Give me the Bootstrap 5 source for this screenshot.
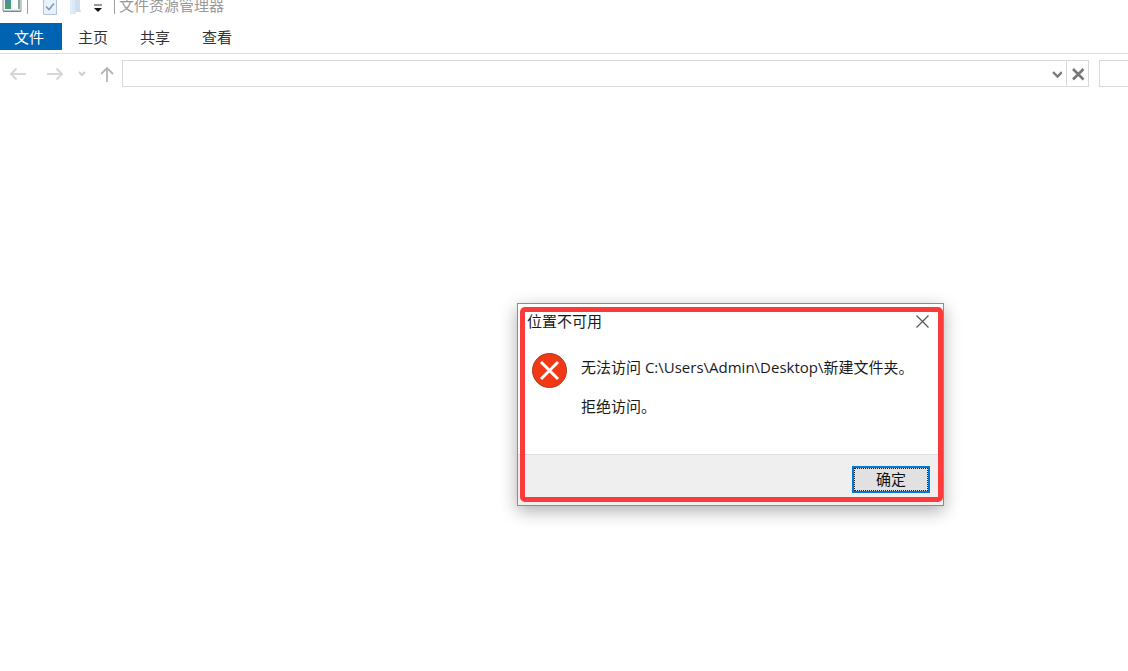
<!DOCTYPE html>
<html lang="zh-CN">
<head>
<meta charset="utf-8">
<meta name="viewport" content="width=device-width, initial-scale=1">
<title>文件资源管理器</title>
<link href="https://cdn.jsdelivr.net/npm/bootstrap@5.3.0/dist/css/bootstrap.min.css" rel="stylesheet">
<style>
  body { font-family: "Open Sans", "Noto Sans CJK SC", sans-serif; font-size: 15px; line-height: 20px; color: #1a1a1a; background: #fff; }
  svg { display: block; flex: none; }
  .titlebar { height: 23px; }
  .titlebar .caption { line-height: 11px; color: #999; padding-left: 4px; }
  .divider { width: 1px; height: 14px; background: #a0a0a0; }
  .quick { gap: 12px; padding-left: 14px; padding-right: 11px; }
  .ribbon { height: 31px; border-bottom: 1px solid #dcdddd; }
  .ribbon .nav-link { width: 62px; height: 27px; padding: 0; line-height: 28px; text-align: center; color: #333; border-radius: 0; }
  .ribbon .nav-link.active { padding-right: 4px; color: #fff; background: #0063b1; }
  .addressbar { padding-top: 6px; }
  .navigation { width: 122px; height: 27px; padding-left: 9px; }
  .plain { border: 0; padding: 0; background: none; }
  .field { height: 27px; border: 1px solid #d9d9d9; }
  .field input { border: 0; outline: 0; background: none; min-width: 0; }
  .stop { width: 22px; border-left: 1px solid #d9d9d9 !important; }
  .search { width: 40px; margin-left: 10px; margin-right: -11px; }
  .message { top: 303px; left: calc(50% - 47px); width: 427px; background: #fff; border: 1px solid #8a8c8c; box-shadow: 0 5px 16px rgba(0,0,0,.32); }
  .message-head { padding: 7px 14px 0 9px; }
  .message-body { gap: 13px; min-height: 123px; padding: 22px 14px 0 14px; }
  .message-body p { margin-bottom: 19px; }
  .message-foot { height: 51px; padding: 11px 13px 0 0; border-top: 1px solid #dfdfdf; background: #efefef; }
  .confirm { width: 78px; height: 27px; padding: 0; border: 2px solid #0078d7; background: #e1e1e1; color: #111; line-height: 21px; outline: 1px dotted #222; outline-offset: -3px; }
  .highlight { inset: 3px 0 3px 2px; border: 5px solid #fb3a3a; border-radius: 5px; pointer-events: none; }
</style>
</head>
<body class="overflow-hidden">
<header>
  <div class="titlebar d-flex align-items-start">
    <svg width="27" height="14" viewBox="0 0 27 14">
      <path d="M3 -1h18v12H3z" fill="#edf2f5" stroke="#9299a0"/>
      <path d="M5 0h6v9H5z" fill="#4c9a78"/><path d="M5 0h5L5 5z" fill="#4d86ad"/>
      <path d="M13 0h5v9h-5z" fill="#fff"/><path d="M18 0h2v9h-2z" fill="#79b394"/>
      <path d="M3 11.500h18" stroke="#7e858b"/>
    </svg>
    <span class="divider"></span>
    <div class="quick d-flex">
      <svg width="16" height="16" viewBox="0 0 16 16" role="img" aria-label="属性"><path d="M1.500 -1h13v15.500h-13z" fill="#e9f1fb" stroke="#b3c2dc"/><path d="M4 6.500l3 3L12 3.500" fill="none" stroke="#8299c1" stroke-width="1.600"/></svg>
      <svg width="11" height="15" viewBox="0 0 11 15" role="img" aria-label="新建文件夹"><path d="M0 0h6v14H0z" fill="#dce8f8"/><path d="M5 0h5v10l1 1v1H5z" fill="#d0def1"/><path d="M1 0v12" stroke="#edf4fc"/></svg>
      <svg width="10" height="14" viewBox="0 0 10 14" role="img" aria-label="自定义"><path d="M1 5h8" stroke="#333"/><path d="M1 8h8L5 12z" fill="#111"/></svg>
    </div>
    <span class="divider"></span>
    <span class="caption">文件资源管理器</span>
  </div>
  <nav class="ribbon nav nav-pills">
    <a class="nav-link active" href="#">文件</a>
    <a class="nav-link" href="#">主页</a>
    <a class="nav-link" href="#">共享</a>
    <a class="nav-link" href="#">查看</a>
  </nav>
  <div class="addressbar d-flex">
    <div class="navigation d-flex align-items-center">
      <button class="plain" aria-label="后退"><svg width="18" height="16" viewBox="0 0 18 16" fill="none" stroke="#d6d6d6" stroke-width="2"><path d="M17 8H2M7.500 2.500L2 8 7.500 13.500"/></svg></button>
      <button class="plain ms-3 me-2" aria-label="前进"><svg width="22" height="16" viewBox="0 0 22 16" fill="none" stroke="#d6d6d6" stroke-width="2"><path d="M4 8h15M13.500 2.500L19 8 13.500 13.500"/></svg></button>
      <button class="plain me-2" aria-label="最近"><svg width="16" height="16" viewBox="0 0 16 16" fill="none" stroke="#cfcfcf" stroke-width="2"><path d="M6 6l3 3 3-3"/></svg></button>
      <button class="plain ps-1" aria-label="上移"><svg width="14" height="18" viewBox="0 0 14 18" fill="none" stroke="#b4b4b4" stroke-width="1.800"><path d="M6 17V3M0 9l6-6 6 6"/></svg></button>
    </div>
    <div class="field d-flex flex-grow-1">
      <input class="flex-grow-1" type="text" aria-label="地址">
      <button class="plain pe-1" aria-label="展开"><svg width="12" height="14" viewBox="0 0 12 14" fill="none" stroke="#7c7c7c" stroke-width="2.400"><path d="M3 5l4.500 4.500L12 5"/></svg></button>
      <button class="stop plain d-flex align-items-center justify-content-center" aria-label="停止"><svg width="14" height="14" viewBox="0 0 14 14" stroke="#777" stroke-width="2.600"><path d="M2 2l10.500 10.500M12.500 2L2 12.500"/></svg></button>
    </div>
    <div class="search field"><input class="w-100" type="search" aria-label="搜索"></div>
  </div>
</header>
<section class="message position-absolute" role="dialog" aria-labelledby="message-title">
  <div class="message-head d-flex justify-content-between">
    <span id="message-title">位置不可用</span>
    <button class="plain" aria-label="关闭"><svg width="13" height="13" viewBox="0 0 13 13" stroke="#555" stroke-width="1.200"><path d="M.5 .5l12 12M12.500 .5l-12 12"/></svg></button>
  </div>
  <div class="message-body d-flex align-items-start">
    <svg width="36" height="36" viewBox="0 0 36 36"><circle cx="17.500" cy="17.500" r="17" fill="#f03a17" stroke="#b5341c"/><path d="M9 9l17 17M26 9l-17 17" stroke="#fff" stroke-width="3"/></svg>
    <div class="text-nowrap pt-1">
      <p>无法访问 C:\Users\Admin\Desktop\新建文件夹。</p>
      <p>拒绝访问。</p>
    </div>
  </div>
  <div class="message-foot d-flex justify-content-end"><button class="confirm">确定</button></div>
  <div class="highlight position-absolute"></div>
</section>
<script src="https://cdn.jsdelivr.net/npm/bootstrap@5.3.0/dist/js/bootstrap.bundle.min.js"></script>
</body>
</html>
